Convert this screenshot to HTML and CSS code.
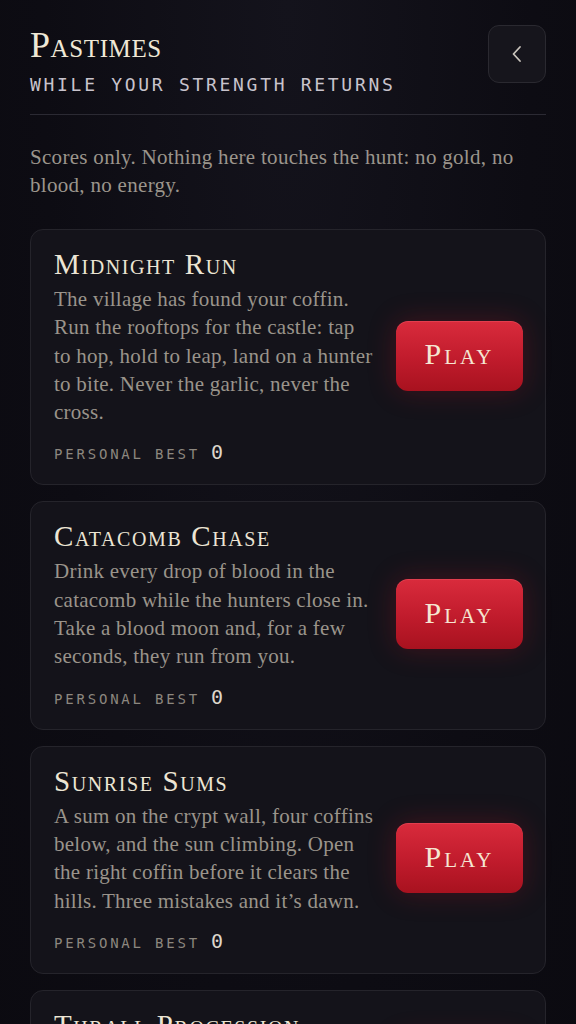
FILE: index.html
```html
<!DOCTYPE html>
<html lang="en">
<head>
<meta charset="utf-8">
<title>Pastimes</title>
<link rel="stylesheet" href="styles.css">
</head>
<body>
<main class="page">
  <header class="top">
    <div class="heading">
      <h1 class="title">Pastimes</h1>
      <p class="subtitle">While your strength returns</p>
    </div>
    <button class="back" aria-label="Back">
      <svg width="14" height="20" viewBox="0 0 14 20"><path d="M10 3 L3.5 10 L10 17" fill="none" stroke="#c9c4bc" stroke-width="1.8" stroke-linecap="round" stroke-linejoin="round"/></svg>
    </button>
  </header>
  <hr class="rule">
  <p class="intro">Scores only. Nothing here touches the hunt: no gold, no blood, no energy.</p>

  <section class="games">
    <article class="game">
      <div class="info">
        <h2 class="name">Midnight Run</h2>
        <p class="desc">The village has found your coffin. Run the rooftops for the castle: tap to hop, hold to leap, land on a hunter to bite. Never the garlic, never the cross.</p>
        <p class="best"><span class="best-label">Personal best</span><span class="best-value">0</span></p>
      </div>
      <button class="play">Play</button>
    </article>

    <article class="game">
      <div class="info">
        <h2 class="name">Catacomb Chase</h2>
        <p class="desc">Drink every drop of blood in the catacomb while the hunters close in. Take a blood moon and, for a few seconds, they run from you.</p>
        <p class="best"><span class="best-label">Personal best</span><span class="best-value">0</span></p>
      </div>
      <button class="play">Play</button>
    </article>

    <article class="game">
      <div class="info">
        <h2 class="name">Sunrise Sums</h2>
        <p class="desc">A sum on the crypt wall, four coffins below, and the sun climbing. Open the right coffin before it clears the hills. Three mistakes and it’s dawn.</p>
        <p class="best"><span class="best-label">Personal best</span><span class="best-value">0</span></p>
      </div>
      <button class="play">Play</button>
    </article>

    <article class="game">
      <div class="info">
        <h2 class="name">Thrall Procession</h2>
        <p class="desc">Lead the thralls through the crypt in order before the bells toll.</p>
        <p class="best"><span class="best-label">Personal best</span><span class="best-value">0</span></p>
      </div>
      <button class="play">Play</button>
    </article>
  </section>
</main>
</body>
</html>
```
FILE: styles.css
```css
* { box-sizing: border-box; }

html, body {
  margin: 0;
  padding: 0;
}

body {
  background: radial-gradient(ellipse at 50% 0%, #14131c 0%, #0d0c13 60%, #0b0a10 100%);
  background-color: #0c0b12;
  color: #e9e2d3;
  font-family: "Liberation Serif", "DejaVu Serif", serif;
  min-height: 1024px;
}

.page {
  padding: 24px 30px 40px;
}

.top {
  display: flex;
  justify-content: space-between;
  align-items: flex-start;
}

.title {
  margin: 0;
  font-family: "Liberation Serif", serif;
  font-variant: small-caps;
  font-weight: 400;
  font-size: 36px;
  line-height: 42px;
  letter-spacing: 0.6px;
  color: #efe8d6;
}

.subtitle {
  margin: 7px 0 0;
  font-family: "DejaVu Sans Mono", "Liberation Mono", monospace;
  text-transform: uppercase;
  font-size: 18px;
  line-height: 24px;
  letter-spacing: 2.7px;
  color: #c8c3cc;
}

.back {
  width: 58px;
  height: 58px;
  margin-top: 1px;
  border-radius: 11px;
  border: 1px solid #2a2930;
  background: #16151c;
  display: flex;
  align-items: center;
  justify-content: center;
  padding: 0;
}

.rule {
  margin: 17px 0 0;
  border: 0;
  border-top: 1px solid #2b2a33;
}

.intro {
  margin: 28px 0 0;
  font-size: 21px;
  line-height: 28px;
  letter-spacing: 0.3px;
  color: #9b958c;
}

.games {
  display: flex;
  flex-direction: column;
  gap: 16px;
  margin-top: 30px;
}

.game {
  display: flex;
  align-items: center;
  gap: 20px;
  padding: 17px 22px 20px 23px;
  border-radius: 13px;
  border: 1px solid #25242b;
  background: #14131a;
}

.info {
  flex: 1;
  min-width: 0;
}

.name {
  margin: 0;
  font-variant: small-caps;
  font-weight: 400;
  font-size: 29px;
  line-height: 34px;
  letter-spacing: 1.6px;
  color: #ece5d4;
}

.desc {
  margin: 4px 0 0;
  font-size: 21px;
  line-height: 28.3px;
  letter-spacing: 0.25px;
  color: #9a948b;
}

.best {
  margin: 14px 0 0;
  display: flex;
  align-items: baseline;
  gap: 11px;
  font-family: "DejaVu Sans Mono", "Liberation Mono", monospace;
}

.best-label {
  text-transform: uppercase;
  font-size: 14px;
  letter-spacing: 2.8px;
  color: #8c877f;
}

.best-value {
  font-size: 20px;
  color: #ddd6cb;
}

.play {
  flex: none;
  width: 127px;
  height: 70px;
  border: 0;
  border-radius: 12px;
  background: linear-gradient(180deg, #d92b3c 0%, #c01b2c 55%, #a8121f 100%);
  box-shadow: 0 0 28px rgba(190, 20, 40, 0.28), inset 0 1px 0 rgba(255, 120, 130, 0.25);
  color: #f5e6d3;
  font-family: "Liberation Serif", serif;
  font-variant: small-caps;
  font-size: 30px;
  letter-spacing: 3px;
  padding: 0 0 3px;
}
```
